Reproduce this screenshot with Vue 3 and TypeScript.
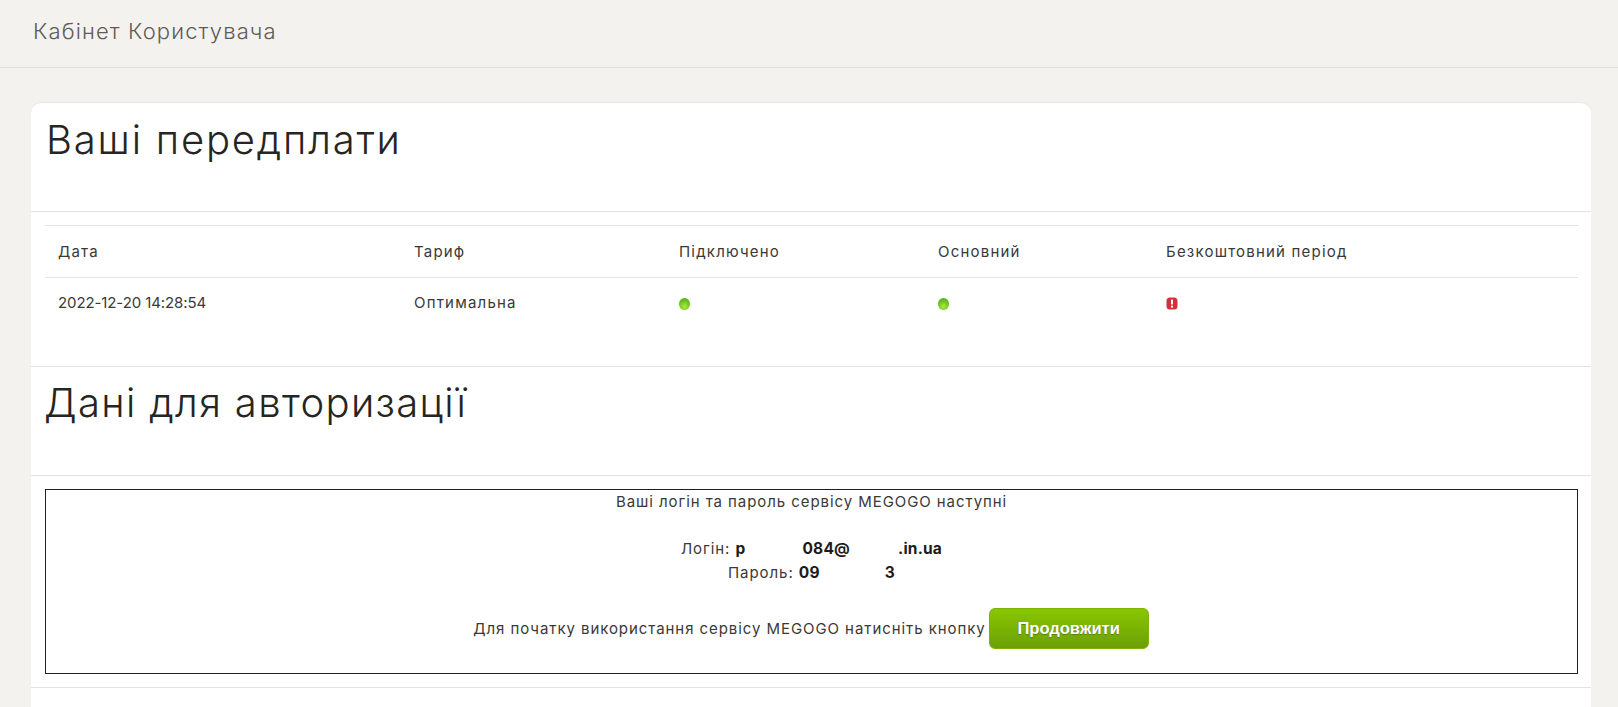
<script setup lang="ts">
const columns: string[] = ['Дата', 'Тариф', 'Підключено', 'Основний', 'Безкоштовний період']
</script>

<template>
  <div class="page">
    <header class="topbar">Кабінет Користувача</header>
    <main class="card">
      <section class="head first"><h2>Ваші передплати</h2></section>
      <div class="table-wrap">
        <table>
          <colgroup>
            <col class="c1" /><col class="c2" /><col class="c3" /><col class="c4" /><col />
          </colgroup>
          <thead>
            <tr><th v-for="c in columns" :key="c">{{ c }}</th></tr>
          </thead>
          <tbody>
            <tr>
              <td class="date">2022-12-20 14:28:54</td>
              <td>Оптимальна</td>
              <td><span class="led"></span></td>
              <td><span class="led"></span></td>
              <td>
                <svg class="err" width="12" height="13" viewBox="0 0 12 13">
                  <rect x="0.5" y="0.5" width="11" height="12" rx="3.5" fill="#d3303c" />
                  <rect x="5" y="2.6" width="2" height="4.8" fill="#fff" />
                  <rect x="5" y="8.6" width="2" height="2" fill="#fff" />
                </svg>
              </td>
            </tr>
          </tbody>
        </table>
      </div>
      <section class="head second"><h2>Дані для авторизації</h2></section>
      <div class="box-wrap">
        <div class="box">
          <p class="intro">Ваші логін та пароль сервісу MEGOGO наступні</p>
          <p class="cred">Логін: <b>р</b><span class="gap g1"></span><b>084@</b><span class="gap g2"></span><b>.in.ua</b></p>
          <p class="cred">Пароль: <b>09</b><span class="gap g3"></span><b>3</b></p>
          <p class="action">
            <span>Для початку використання сервісу MEGOGO натисніть кнопку</span>
            <button type="button">Продовжити</button>
          </p>
        </div>
      </div>
    </main>
  </div>
</template>

<style>
html, body { margin: 0; background: #f3f2ee; overflow: hidden; }
</style>

<style scoped>
.page {
  height: 707px;
  overflow: hidden;
  font-family: Inter, "Noto Sans", sans-serif;
  color: #2b2a28;
  background: #f3f2ee;
}
.topbar {
  height: 67px;
  border-bottom: 1px solid #e0dfdb;
  padding-left: 33px;
  font-size: 22px;
  font-weight: 300;
  letter-spacing: 1.12px;
  line-height: 62px;
  color: #5f5b57;
}
.card {
  margin: 35px 27px 0 31px;
  background: #fff;
  border-radius: 10px 10px 0 0;
  box-shadow: 0 -1px 0 #e8e7e3;
  height: 640px;
}
.head {
  height: 108px;
  border-bottom: 1px solid #e3e3e1;
}
.head h2 {
  margin: 0;
  font-weight: 300;
  font-size: 40px;
  letter-spacing: 1.8px;
  line-height: 48px;
  color: #262522;
}
.first h2 { padding: 13px 0 0 15px; }
.second h2 { padding: 12px 0 0 13px; letter-spacing: 1.35px; }
.table-wrap { padding: 13px 13px 0 14px; height: 141px; border-bottom: 1px solid #e3e3e1; }
table {
  width: 100%;
  border-collapse: collapse;
  table-layout: fixed;
  font-size: 15px;
  letter-spacing: 1.2px;
  border-top: 1px solid #e3e3e1;
}
.c1 { width: 356px; }
.c2 { width: 265px; }
.c3 { width: 259px; }
.c4 { width: 228px; }
th, td {
  text-align: left;
  font-weight: 400;
  padding: 0 0 0 13px;
  color: #3a3936;
}
th { height: 51px; border-bottom: 1px solid #e3e3e1; }
td { height: 48px; padding-bottom: 2px; }
td.date { letter-spacing: -0.1px; }
.led {
  display: block;
  width: 11px;
  height: 12px;
  margin-top: 4px;
  border-radius: 50%;
  background: radial-gradient(circle at 50% 72%, #a8ea3e 0%, #6cc21f 55%, #4f9a35 100%);
  box-shadow: 0 0 2px #cfeeb0;
}
.err { display: block; margin-top: 3px; }
.box-wrap { padding: 13px 13px 13px 14px; border-bottom: 1px solid #e3e3e1; }
.box {
  height: 185px;
  border: 1px solid #1f1f1f;
  box-sizing: border-box;
  text-align: center;
  font-size: 15px;
  letter-spacing: 0.93px;
  color: #3a3936;
}
.box p { margin: 0; }
.intro { line-height: 24px; }
.cred { line-height: 24px; }
.intro + .cred { margin-top: 23px; }
.cred b { font-weight: 700; color: #1d1c1a; font-size: 15.5px; letter-spacing: 0.2px; }
.gap { display: inline-block; }
.g1 { width: 57px; }
.g2 { width: 48px; }
.g3 { width: 65px; }
.action {
  margin-top: 23px !important;
  display: flex;
  justify-content: center;
  align-items: center;
  gap: 3px;
  padding-right: 1px;
}
button {
  width: 160px;
  height: 41px;
  border: 1px solid #7fb208;
  border-radius: 6px;
  background: linear-gradient(#89c700, #6c9f07);
  color: #fff;
  font: 700 16.5px "Liberation Sans", Arial, sans-serif;
  letter-spacing: 0;
  text-shadow: 0 1px 1px #5a7d10;
  padding: 0;
}
</style>
